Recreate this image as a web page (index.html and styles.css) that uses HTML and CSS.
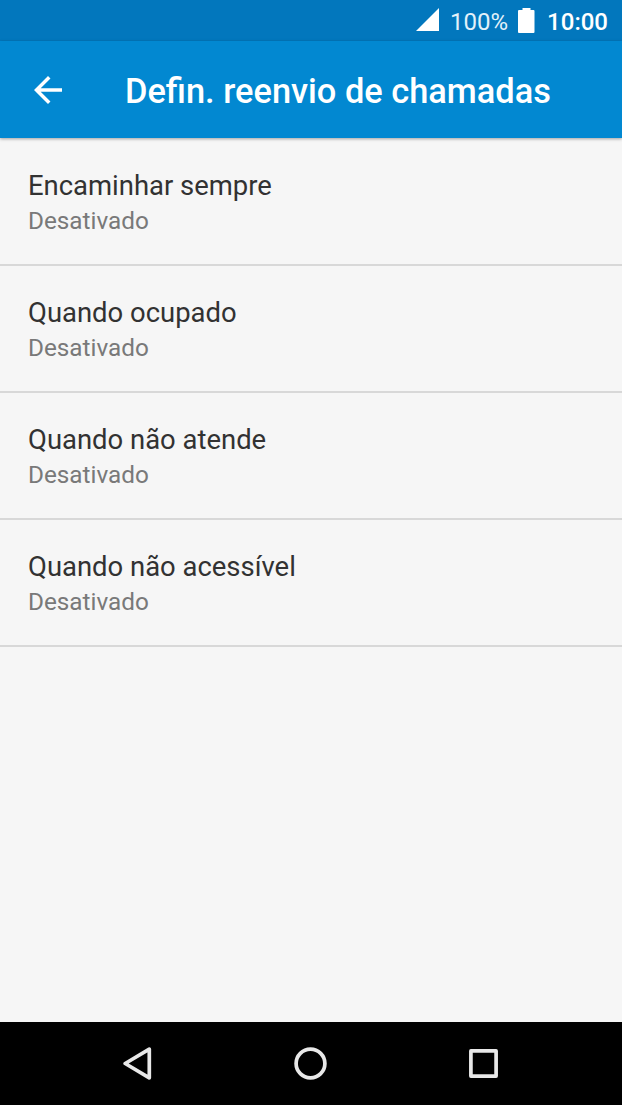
FILE: index.html
```html
<!DOCTYPE html>
<html lang="pt">
<head>
<meta charset="utf-8">
<title>Defin. reenvio de chamadas</title>
<link rel="stylesheet" href="styles.css">
</head>
<body>
<div class="screen">
  <div class="status">
    <svg class="signal" width="23" height="23" viewBox="0 0 23 23"><path d="M0 23L23 0V23Z"/></svg>
    <span class="percent">100%</span>
    <svg class="battery" width="17" height="25" viewBox="0 0 17 25"><path d="M4.5 0H12.5V2H15.5Q16.5 2 16.5 3V24Q16.5 25 15.5 25H1Q0 25 0 24V3Q0 2 1 2H4.5Z"/></svg>
    <span class="clock">10:00</span>
  </div>
  <header class="appbar">
    <svg class="back" width="28" height="28" viewBox="4 4 16 16"><path d="M20 11H7.83l5.59-5.59L12 4l-8 8 8 8 1.41-1.41L7.83 13H20v-2z"/></svg>
    <h1 class="title">Defin. reenvio de chamadas</h1>
  </header>
  <main class="list">
    <div class="item"><div class="label">Encaminhar sempre</div><div class="state">Desativado</div></div>
    <div class="item"><div class="label">Quando ocupado</div><div class="state">Desativado</div></div>
    <div class="item"><div class="label">Quando não atende</div><div class="state">Desativado</div></div>
    <div class="item"><div class="label">Quando não acessível</div><div class="state">Desativado</div></div>
  </main>
  <nav class="nav">
    <svg width="29" height="33" viewBox="0 0 29 33"><path d="M26.3 2.2V30.8L2.2 16.5Z"/></svg>
    <svg width="33" height="33" viewBox="0 0 33 33"><circle cx="16.5" cy="16.5" r="14.4"/></svg>
    <svg width="29" height="29" viewBox="0 0 29 29"><rect x="1.9" y="1.9" width="25.2" height="25.2"/></svg>
  </nav>
</div>
</body>
</html>
```
FILE: styles.css
```css
body { margin: 0; }
.screen { display: flex; flex-direction: column; width: 622px; height: 1105px; background: #f6f6f6; font-family: Roboto, sans-serif; overflow: hidden; }
.status { display: flex; height: 41px; box-sizing: border-box; justify-content: flex-end; align-items: center; padding-right: 14px; background: #0277bd; color: #fff; font-size: 24px; fill: #fff; }
.signal { margin-bottom: 2px; }
.percent { margin: 2px 10px 0 11px; color: #e1f1fa; }
.clock { margin: 2px 0 0 12px; font-weight: 500; }
.appbar { display: flex; height: 97px; align-items: center; background: #0288d1; color: #fff; box-shadow: 0 1px 3px rgba(0,0,0,.35); }
.back { margin-left: 34px; fill: #fff; }
.title { margin: 2px 0 0 63px; font-size: 34.4px; font-weight: 500; line-height: 42px; white-space: nowrap; }
.list { flex: 1; padding-top: 1px; }
.item { height: 127px; box-sizing: border-box; padding: 30px 28px 0; border-bottom: 2px solid #d8d8d8; }
.label { color: #323232; font-size: 27.45px; line-height: 35px; }
.state { color: #797979; font-size: 24.3px; line-height: 34px; }
.nav { display: flex; height: 83px; align-items: center; justify-content: center; gap: 142px; padding-right: 1px; background: #000; fill: none; stroke: #e8e8e8; stroke-width: 3.7; stroke-linejoin: round; }
```
